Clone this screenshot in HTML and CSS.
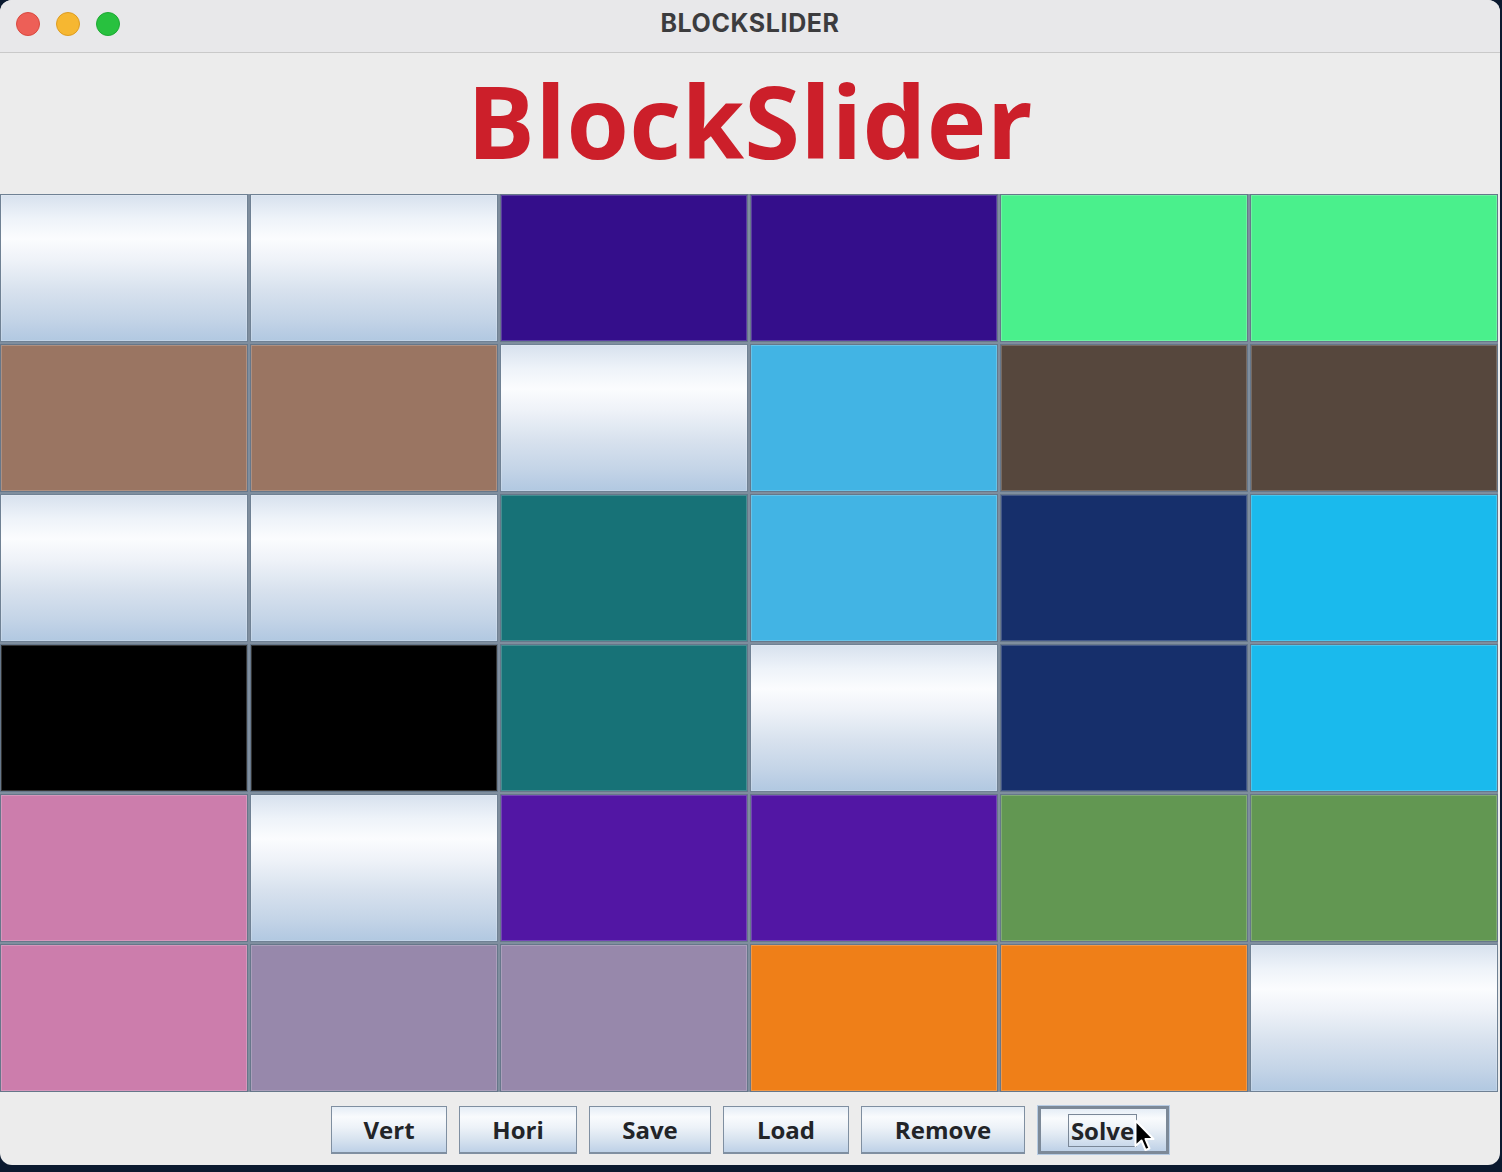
FILE: index.html
```html
<!DOCTYPE html>
<html lang="en">
<head>
<meta charset="utf-8">
<title>BLOCKSLIDER</title>
<link rel="stylesheet" href="styles.css">
</head>
<body>
<div class="window">
  <div class="titlebar">
    <div class="lights">
      <span class="light red"></span>
      <span class="light yellow"></span>
      <span class="light green"></span>
    </div>
    <div class="wintitle">BLOCKSLIDER</div>
  </div>
  <div class="header">BlockSlider</div>
  <div class="grid">
    <div class="cell empty"></div><div class="cell empty"></div><div class="cell c-indigo"></div><div class="cell c-indigo"></div><div class="cell c-mint"></div><div class="cell c-mint"></div>
    <div class="cell c-brown"></div><div class="cell c-brown"></div><div class="cell empty"></div><div class="cell c-sky"></div><div class="cell c-dbrown"></div><div class="cell c-dbrown"></div>
    <div class="cell empty"></div><div class="cell empty"></div><div class="cell c-teal"></div><div class="cell c-sky"></div><div class="cell c-navy"></div><div class="cell c-cyan"></div>
    <div class="cell c-black"></div><div class="cell c-black"></div><div class="cell c-teal"></div><div class="cell empty"></div><div class="cell c-navy"></div><div class="cell c-cyan"></div>
    <div class="cell c-pink"></div><div class="cell empty"></div><div class="cell c-purple"></div><div class="cell c-purple"></div><div class="cell c-green"></div><div class="cell c-green"></div>
    <div class="cell c-pink"></div><div class="cell c-lav"></div><div class="cell c-lav"></div><div class="cell c-orange"></div><div class="cell c-orange"></div><div class="cell empty"></div>
  </div>
  <div class="buttons">
    <button class="btn b-vert">Vert</button>
    <button class="btn b-hori">Hori</button>
    <button class="btn b-save">Save</button>
    <button class="btn b-load">Load</button>
    <button class="btn b-remove">Remove</button>
    <button class="btn b-solve focused"><span class="focusring">Solve</span>
      <svg class="cursor" width="24" height="36" viewBox="0 0 24 36"><path d="M1.5 1.5 L1.5 27 L7.5 21.5 L11.5 31 L15.5 29.3 L11.5 20 L19.5 20 Z" fill="#000" stroke="#fff" stroke-width="2" stroke-linejoin="round"/></svg>
    </button>
  </div>
</div>
</body>
</html>
```

FILE: styles.css
```css
html, body {
  margin: 0;
  padding: 0;
}
body {
  background: #0b1a30;
  width: 1502px;
  height: 1172px;
  overflow: hidden;
}
.window {
  width: 1500px;
  height: 1165px;
  background: #ececec;
  border-radius: 12px;
  overflow: hidden;
  display: flex;
  flex-direction: column;
}
.titlebar {
  height: 52px;
  background: #e8e8ea;
  border-bottom: 1px solid #c9c9c9;
  position: relative;
  display: flex;
  align-items: center;
  justify-content: center;
}
.lights {
  position: absolute;
  left: 16px;
  top: 12px;
  display: flex;
  gap: 16px;
}
.light {
  width: 24px;
  height: 24px;
  border-radius: 50%;
  display: block;
  box-sizing: border-box;
}
.red { background: #ed5f57; border: 1px solid #d9493f; }
.yellow { background: #f6b731; border: 1px solid #dd9c22; }
.green { background: #28c13f; border: 1px solid #1ea934; }
.wintitle {
  font-family: Inter, "Liberation Sans", sans-serif;
  font-weight: 700;
  font-size: 25px;
  color: #3c3c3e;
  letter-spacing: 0.6px;
  margin-top: -6px;
}
.header {
  height: 141px;
  box-sizing: border-box;
  padding-top: 17px;
  text-align: center;
  font-family: "Open Sans", "DejaVu Sans", sans-serif;
  font-weight: 700;
  font-size: 101px;
  letter-spacing: 0.3px;
  line-height: 1;
  color: #cc1f2a;
}
.grid {
  display: grid;
  grid-template-columns: repeat(6, 248px);
  grid-template-rows: repeat(6, 148px);
  gap: 2px;
  background: #7f8e9e;
  width: 1498px;
  height: 898px;
}
.cell {
  box-sizing: border-box;
  border: 1px solid #66778a;
  box-shadow: inset 0 0 0 1px rgba(255, 255, 255, 0.2);
}
.empty {
  background: linear-gradient(to bottom, #d7e1ee 0%, #eef3f9 16%, #fbfcfe 30%, #eef2f8 45%, #d8e2ee 65%, #c4d4e7 85%, #b1c8e1 100%);
  border-color: #6f8194;
}
.c-indigo { background: #340e8b; }
.c-mint { background: #4af08c; }
.c-brown { background: #9a7562; }
.c-sky { background: #42b4e4; }
.c-dbrown { background: #56473d; }
.c-teal { background: #177277; }
.c-navy { background: #162f6b; }
.c-cyan { background: #1abaed; }
.c-black { background: #000000; }
.c-pink { background: #cc7dac; }
.c-purple { background: #5216a4; }
.c-green { background: #629752; }
.c-lav { background: #9788ab; }
.c-orange { background: #ef7f18; }
.buttons {
  flex: 1;
  display: flex;
  justify-content: center;
  align-items: flex-start;
  gap: 12px;
  padding-top: 14px;
}
.btn {
  height: 48px;
  box-sizing: border-box;
  border: 1px solid #7f8fa1;
  border-bottom-width: 2px;
  background: linear-gradient(to bottom, #e5edf6 0%, #f9fbfd 22%, #edf2f8 45%, #d9e4f0 70%, #bed1e7 100%);
  font-family: "Open Sans", "DejaVu Sans", sans-serif;
  font-weight: 700;
  font-size: 24px;
  color: #222428;
  padding: 0;
  display: flex;
  align-items: center;
  justify-content: center;
  position: relative;
}
.b-vert { width: 116px; }
.b-hori { width: 118px; }
.b-save { width: 122px; }
.b-load { width: 126px; }
.b-remove { width: 164px; }
.b-solve { width: 131px; margin-left: 1px; }
.focused {
  border: 3px solid #7c8998;
  box-shadow: 0 0 0 1px #b6cbe3;
}
.focusring {
  border: 1px solid #7a8797;
  padding: 0 2px;
  line-height: 31px;
  margin-left: -2px;
}
.cursor {
  position: absolute;
  left: 93px;
  top: 10px;
}
```
